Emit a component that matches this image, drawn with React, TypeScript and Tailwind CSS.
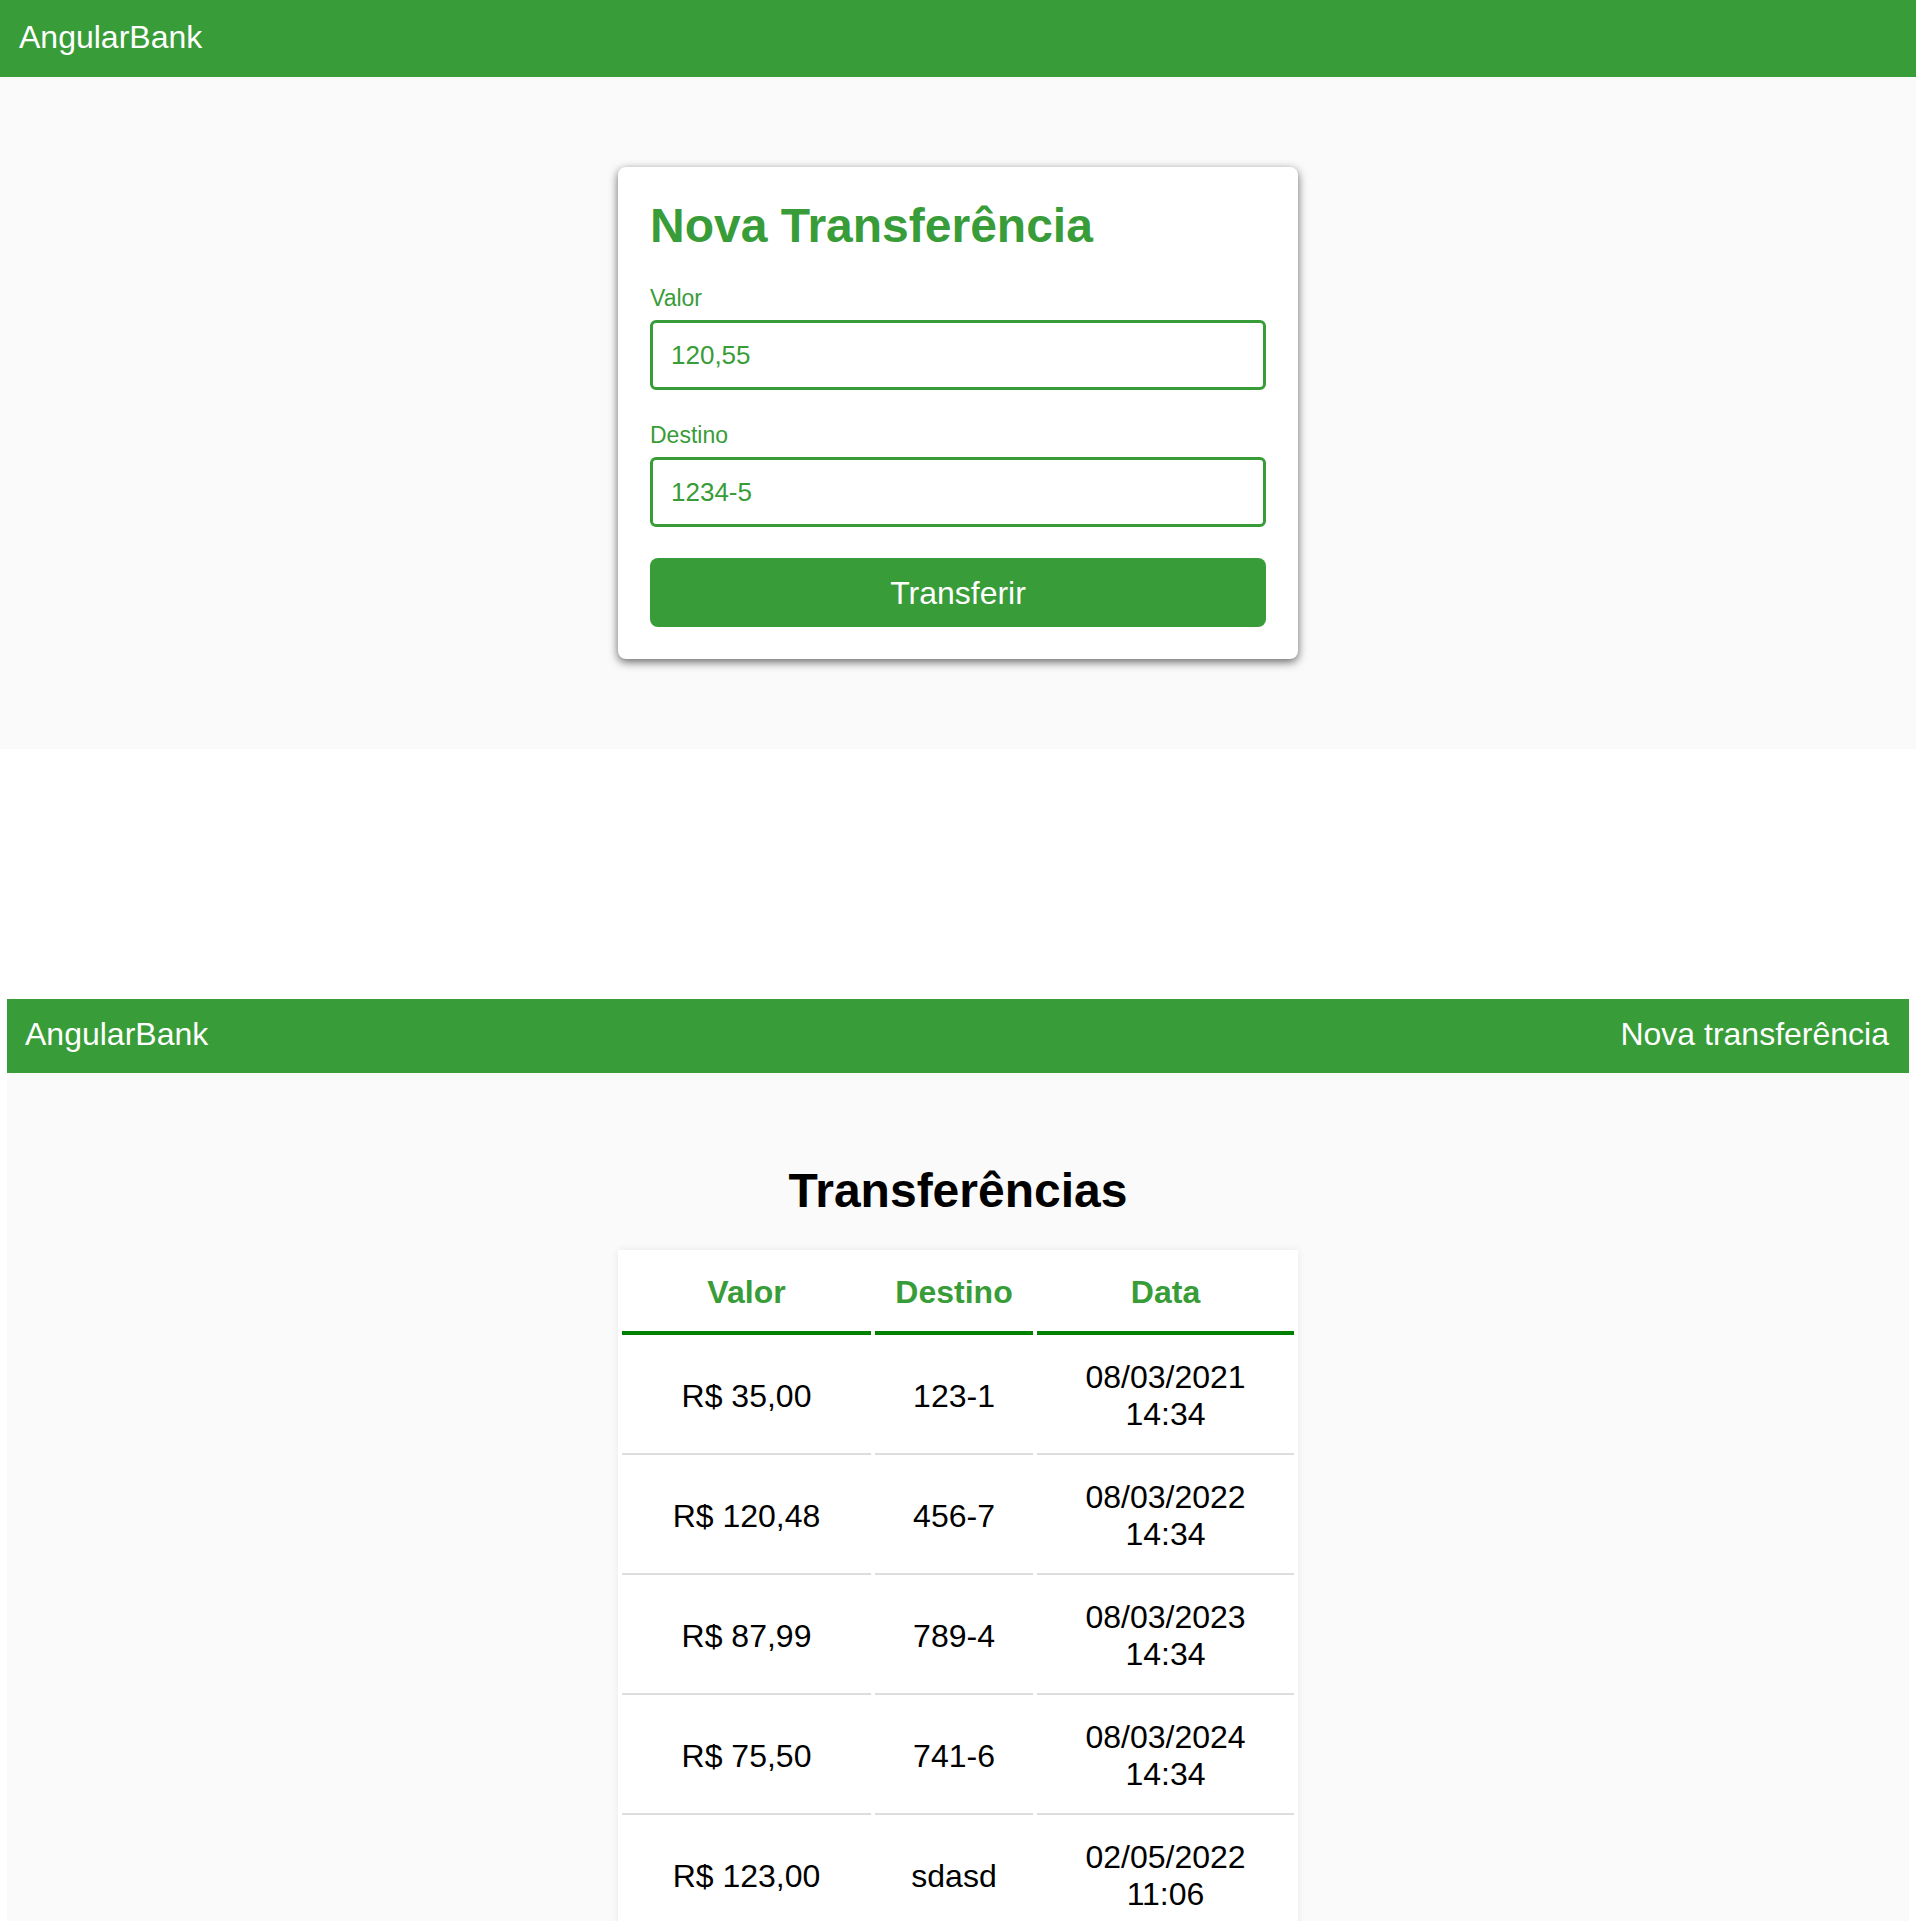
import React from "react";

const rows = [
  { valor: "R$ 35,00", destino: "123-1", data: "08/03/2021", hora: "14:34" },
  { valor: "R$ 120,48", destino: "456-7", data: "08/03/2022", hora: "14:34" },
  { valor: "R$ 87,99", destino: "789-4", data: "08/03/2023", hora: "14:34" },
  { valor: "R$ 75,50", destino: "741-6", data: "08/03/2024", hora: "14:34" },
  { valor: "R$ 123,00", destino: "sdasd", data: "02/05/2022", hora: "11:06" },
];

function NovaTransferencia() {
  return (
    <div className="w-[680px] rounded-[8px] bg-white px-[32px] pt-[32px] pb-[32px] shadow-[0_3px_10px_rgba(0,0,0,0.6)]">
      <h1 className="text-[48px] font-bold leading-[54px] text-[#389c38]">Nova Transferência</h1>
      <label className="mt-[32px] block text-[23px] leading-[26px] text-[#389c38]">Valor</label>
      <input
        readOnly
        value="120,55"
        className="mt-[9px] block h-[70px] w-full rounded-[6px] border-[3px] border-[#389c38] bg-white px-[18px] text-[26px] text-[#389c38] outline-none"
      />
      <label className="mt-[32px] block text-[23px] leading-[26px] text-[#389c38]">Destino</label>
      <input
        readOnly
        value="1234-5"
        className="mt-[9px] block h-[70px] w-full rounded-[6px] border-[3px] border-[#389c38] bg-white px-[18px] text-[26px] text-[#389c38] outline-none"
      />
      <button className="mt-[31px] flex h-[69px] w-full items-center justify-center rounded-[8px] bg-[#389c38] text-[32px] text-white">
        Transferir
      </button>
    </div>
  );
}

function Extrato() {
  return (
    <div className="w-[680px] bg-white shadow-[0_0_8px_rgba(0,0,0,0.07)]">
      <table className="w-[680px] table-fixed border-separate border-spacing-1 text-center text-[32px] leading-[37px] text-black">
        <colgroup>
          <col className="w-[249px]" />
          <col className="w-[158px]" />
          <col className="w-[257px]" />
        </colgroup>
        <thead>
          <tr>
            <th className="border-b-4 border-[#008000] px-[20px] py-[20px] font-bold text-[#389c38]">Valor</th>
            <th className="border-b-4 border-[#008000] px-[20px] py-[20px] font-bold text-[#389c38]">Destino</th>
            <th className="border-b-4 border-[#008000] px-[20px] py-[20px] font-bold text-[#389c38]">Data</th>
          </tr>
        </thead>
        <tbody>
          {rows.map((r) => (
            <tr key={r.valor + r.destino}>
              <td className="border-b-2 border-[#dddddd] px-[20px] py-[20px] align-middle">{r.valor}</td>
              <td className="border-b-2 border-[#dddddd] px-[20px] py-[20px] align-middle">{r.destino}</td>
              <td className="border-b-2 border-[#dddddd] px-[20px] py-[20px] align-middle">
                <span className="block">{r.data}</span>
                <span className="block">{r.hora}</span>
              </td>
            </tr>
          ))}
        </tbody>
      </table>
    </div>
  );
}

export default function App() {
  return (
    <div className="flex h-[1921px] w-[1916px] flex-col overflow-hidden bg-white font-['Liberation_Sans',Arial,sans-serif]">
      {/* First screen */}
      <section className="flex flex-col">
        <header className="flex h-[77px] items-center bg-[#389c38] pb-[3px] pl-[19px] text-[32px] leading-[37px] text-white">
          AngularBank
        </header>
        <main className="flex h-[672px] items-start justify-center bg-[#fafafa] pt-[90px]">
          <NovaTransferencia />
        </main>
      </section>

      <div className="h-[250px] shrink-0 bg-white" />

      {/* Second screen */}
      <section className="mx-[7px] flex flex-1 flex-col">
        <header className="flex h-[74px] shrink-0 items-center justify-between bg-[#389c38] pb-[3px] pl-[18px] pr-[20px] text-[32px] leading-[37px] text-white">
          <span>AngularBank</span>
          <span>Nova transferência</span>
        </header>
        <main className="flex flex-1 flex-col items-center bg-[#fafafa] pt-[90px]">
          <h2 className="text-[48px] font-bold leading-[55px] text-black">Transferências</h2>
          <div className="mt-[32px]">
            <Extrato />
          </div>
        </main>
      </section>
    </div>
  );
}
